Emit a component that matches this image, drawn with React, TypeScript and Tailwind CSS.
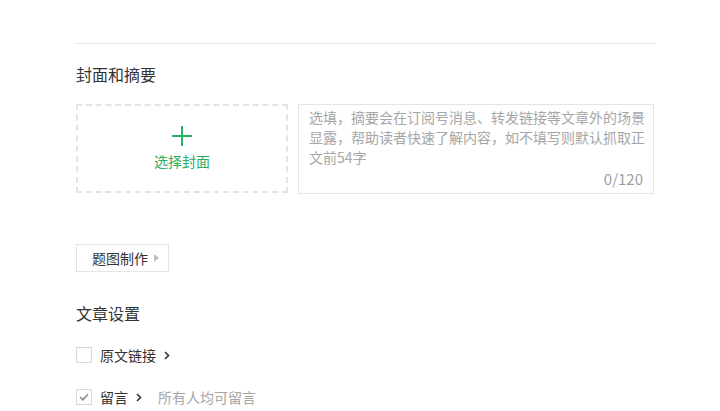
export default function App() {
  return (
    <div
      className="min-h-screen bg-white text-[#333]"
      style={{ fontFamily: '"Noto Sans CJK SC", "Noto Sans", sans-serif' }}
    >
      <div className="ml-[76px] w-[579px] pt-[43px]">
        <div className="h-px bg-[#e7e7eb]" />

        {/* 封面和摘要 */}
        <h2 className="mt-[20px] text-[16px] leading-[21px] font-normal">封面和摘要</h2>
        <div className="mt-[19px] flex gap-[10px]">
          <div className="flex h-[89px] w-[212px] flex-col items-center justify-center border-2 border-dashed border-[#e4e4e4] pb-[2px]">
            <svg width="22" height="22" viewBox="0 0 22 22">
              <path d="M11 1v20M1 11h20" stroke="#2aae67" strokeWidth="2" />
            </svg>
            <span className="mt-[5px] text-[14px] leading-[18px] text-[#2aae67]">选择封面</span>
          </div>
          <div className="relative h-[90px] w-[356px] border border-[#e4e4e4] pl-[10px] pr-[4px] pt-[2px]">
            <p className="text-[14px] leading-[20px] text-[#a6a6a6]">
              选填，摘要会在订阅号消息、转发链接等文章外的场景显露，帮助读者快速了解内容，如不填写则默认抓取正文前54字
            </p>
            <span className="absolute right-[10px] bottom-[4px] text-[15px] leading-[20px] text-[#a0a0a0]">0/120</span>
          </div>
        </div>

        {/* 题图制作 */}
        <button className="mt-[50px] flex h-[28px] items-center border border-[#e4e4e4] bg-white pl-[15px] pr-[8px] text-[14px] text-[#333]">
          题图制作
          <svg width="6" height="8" viewBox="0 0 6 8" className="ml-[6px]">
            <path d="M0 0l5 4-5 4z" fill="#bdbdbd" />
          </svg>
        </button>

        {/* 文章设置 */}
        <h2 className="mt-[31px] text-[16px] leading-[21px] font-normal">文章设置</h2>

        <div className="mt-[23px] flex h-[16px] items-center">
          <span className="h-[16px] w-[16px] border border-[#d9d9d9] bg-white" />
          <span className="ml-[8px] text-[14px] text-[#333]">原文链接</span>
          <svg width="6" height="9" viewBox="0 0 6 9" className="ml-[8px]">
            <path d="M1 1l3.5 3.5L1 8" stroke="#333" strokeWidth="1.6" fill="none" />
          </svg>
        </div>

        <div className="mt-[26px] flex h-[16px] items-center">
          <span className="flex h-[16px] w-[16px] items-center justify-center border border-[#d9d9d9] bg-white">
            <svg width="10" height="8" viewBox="0 0 10 8">
              <path d="M1 4l2.8 2.8L9 1.2" stroke="#8a8a8a" strokeWidth="1.6" fill="none" />
            </svg>
          </span>
          <span className="ml-[8px] text-[14px] text-[#333]">留言</span>
          <svg width="6" height="9" viewBox="0 0 6 9" className="ml-[8px]">
            <path d="M1 1l3.5 3.5L1 8" stroke="#333" strokeWidth="1.6" fill="none" />
          </svg>
          <span className="ml-[16px] text-[14px] text-[#a6a6a6]">所有人均可留言</span>
        </div>
      </div>
    </div>
  )
}
